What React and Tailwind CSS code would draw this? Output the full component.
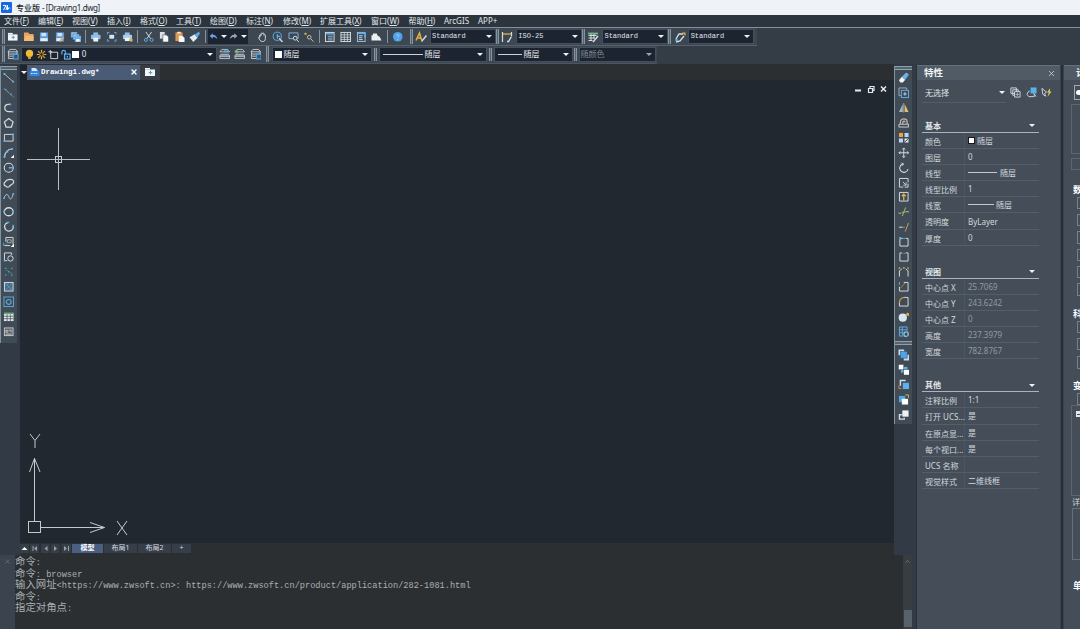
import { ChevronUp, X } from 'lucide-react';

const W = '#d5dde3';
const B = '#5cadea';
const Y = '#e3b348';

// 12x12 toolbar glyphs
const icons = {
  newFile: <><rect x="1" y="3.5" width="10" height="6.500" fill="#f2f6f8" /><path d="M1 2.8h5" stroke="#f2f6f8" strokeWidth="1.600" /><path d="M6.500 4.8v3.600M4.700 6.6h3.600" stroke="#4aa3bd" /></>,
  open: <><path d="M1 1.500h4.500l1 1.500H11v7H1z" fill="#e9a45c" /><path d="M2.5 5h8.5v5.500H1z" fill="#f4b878" /></>,
  save: <><rect x="2" y="1.500" width="8.500" height="9.500" fill="#5a9bdc" /><rect x="3.5" y="2" width="5" height="3.5" fill="#cfe2f4" /><rect x="2.5" y="7.5" width="7.500" height="3" fill="#e8f0f6" /></>,
  saveAs: <><rect x="2" y="1.500" width="8.500" height="9.500" fill="#5a9bdc" /><rect x="3.5" y="2" width="5" height="3.5" fill="#cfe2f4" /><rect x="2.5" y="7.5" width="6" height="3" fill="#e8f0f6" /><path d="M6 11l4-4.5" stroke="#e9a45c" strokeWidth="1.8" /></>,
  saveAll: <><path d="M1 1h6.5v6H1zM3 3h6.5v6H3z" fill="#9cc7ee" stroke="#2f5f92" strokeWidth=".5" /><rect x="5" y="5" width="6.5" height="6.5" fill="#6cb0ec" /><rect x="6.5" y="8.5" width="3.5" height="2.5" fill="#fff" /></>,
  print: <><rect x="3.5" y="1.5" width="5" height="3" fill="#8dbdea" /><rect x="1" y="4" width="10" height="4.5" rx="1" fill="#8dbdea" /><rect x="3.5" y="7" width="5" height="4" fill="#eef4f8" /></>,
  preview: <><path d="M1.5 3.5v-2h2M8.5 1.5h2v2M10.5 8.5v2h-2M3.5 10.5h-2v-2" stroke={B} /><rect x="3.5" y="4" width="5" height="4" fill="#d9e7f2" /></>,
  plot: <><rect x="3" y="1.5" width="5" height="3" fill="#8dbdea" /><rect x="1" y="4" width="9.500" height="4.5" rx="1" fill="#a9cdee" /><rect x="3" y="7" width="5" height="3.5" fill="#eef4f8" /><circle cx="9.5" cy="9.5" r="1.8" fill={Y} /></>,
  cut: <><path d="M3 1l5 7M9 1L4 8" stroke={W} /><circle cx="3" cy="9.3" r="1.6" stroke={B} /><circle cx="9" cy="9.3" r="1.6" stroke={B} /></>,
  copy: <><path d="M2 1h5v7H2z" fill="#d9e0e5" /><path d="M5 4h3.5L11 6v5.5H5z" fill="#f6f8f9" stroke="#3b4650" strokeWidth=".6" /></>,
  paste: <><rect x="1.5" y="1.5" width="7.5" height="9" fill="#dc9650" /><rect x="3.5" y=".8" width="3.5" height="1.8" fill="#eee" /><path d="M5 5h3.5L11 7v4.5H5z" fill="#f6f8f9" /></>,
  brush: <><path d="M.500 6.500l5.500-3 3 3.500-4.500 4.500z" fill="#ddeaf4" /><path d="M6 4l2.5 3L11.5 2.5 10 .8z" fill={B} /></>,
  undo: <path d="M5 1.5v2.2c3.5 0 5.5 2 6 6-1.600-2.200-3.200-3-6-3v2.300L.8 5.300z" fill="#6f9fe0" />,
  redo: <path d="M7 1.5v2.2c-3.5 0-5.5 2-6 6 1.600-2.200 3.200-3 6-3v2.300l4.200-3.700z" fill="#98a3ad" />,
  hand: <path d="M3 6V4.2M3 4.5c0-1 1.300-1 1.300 0V3c0-1.200 1.500-1.200 1.500 0 0-1.200 1.500-1.200 1.500 0v1.500c0-1 1.400-1 1.400 0V8C8.700 10 7.500 11 6 11 3.500 11 2.300 9 1.800 7c-.2-1 .9-1 1.200-.4z" stroke={W} />,
  zoomRt: <><circle cx="5.5" cy="5.5" r="4.3" stroke={B} /><path d="M5.5 3v5M5.500 5.500h3" stroke="#7cc0f0" /><path d="M7.5 7.5l3.500 4" stroke={W} strokeWidth="1.4" /></>,
  zoomWin: <><path d="M1 2h9.5v6H1z" stroke="#7fb3dd" /><circle cx="7.5" cy="7.5" r="2" fill="#3c4751" stroke={W} /><path d="M9 9l2.300 2.500" stroke={W} /></>,
  zoomPrev: <><path d="M1.500 3l1.500-1 .5 1.500z" fill={Y} stroke={Y} /><circle cx="6.500" cy="6.500" r="1.9" stroke="#c9c2a0" /><path d="M8 8l3 3.200" stroke="#bfc8c8" /></>,
  props: <><rect x="1.5" y="1.5" width="9" height="9.5" stroke={W} /><path d="M2 3h8" stroke={B} strokeWidth="1.6" /><path d="M4 5.5h5M4 7.5h5M4 9.3h5" stroke="#90b7d6" /></>,
  sheet: <><rect x="1" y="1.5" width="10" height="9.5" stroke={W} /><path d="M1 4h10M1 6.5h10M1 8.8h10M4.5 2v9M7.7 2v9" stroke={W} strokeWidth=".8" /></>,
  palette: <><rect x="1.5" y="1.5" width="8" height="9.5" stroke="#9cc0dd" /><path d="M2 2.500h8" stroke={B} strokeWidth="1.500" /><path d="M3 5h4M3 7h3.500M3 9h4" stroke={W} /><path d="M9.500 3v4" stroke={B} strokeWidth="1.800" /></>,
  cloud: <path d="M.500 10V4.500h1.500V2.500h4l1 2.500 2 1 2 4z" fill="#eceff1" />,
  help: <><circle cx="6" cy="6" r="5" fill="#4fa2ea" /><path d="M4.7 5c0-2 2.800-1.800 2.600 0-.2 1-1.300 1-1.300 2" stroke="#bfe0ff" strokeWidth=".8" /><path d="M6 8.3v.8" stroke="#bfe0ff" /></>,
  textStyle: <><path d="M1 9.5L4.5 2 6.500 9M2.5 7h3.500" stroke={Y} strokeWidth="1.500" /><path d="M6.5 10.5L11.500 4.500" stroke={W} strokeWidth="1.500" /></>,
  dimStyle: <><path d="M1.500 1v10M10.5 1v4" stroke={W} strokeWidth="1.2" /><path d="M2 3h8" stroke={Y} strokeWidth="1.300" /><path d="M6 10.5h1.500L10.500 5.500" stroke={W} strokeWidth="1.4" /></>,
  tableStyle: <><path d="M1 2.5h10" stroke="#76b68b" strokeWidth="1.8" /><path d="M1.500 4.500h8M1.500 7h6M1.500 9.500h4M4 3v7M7 3v5" stroke={W} /><path d="M6 11l5-6" stroke={W} strokeWidth="1.4" /></>,
  leader: <><path d="M2 8l3-5h4M2 11l4-1 4-5" stroke={W} strokeWidth="1.4" /><path d="M8 1.500h3.500V5" fill={Y} /><circle cx="2.5" cy="9" r="1.3" fill={B} /></>,
  layers: <><path d="M3 1.500h6L11 4H1zM1.500 4v2.300h9V4M1.500 6.500v2h5M1.500 9v2h5" stroke={W} strokeWidth=".9" /><rect x="7" y="6.500" width="4.500" height="5" stroke={B} fill="#2e5577" /></>,
  layerPrev: <><path d="M3 1.500h6L11 4H1zM1.500 6.500h9M1 9h10M1 11h10V7.500H1z" stroke={W} strokeWidth=".8" /><path d="M5 2.500h5v2H5z" fill={B} /></>,
  layerAdd: <><path d="M3 1.500h6L11 4H1zM1.500 6.500h9M1 9h10M1 11h10V7.500H1z" stroke={W} strokeWidth=".8" /><path d="M1 4h4M3 2v4" stroke="#7ccf70" /></>,
  bulb: <><circle cx="6" cy="4.800" r="4" fill="#efbb33" /><path d="M4.500 8h3v3h-3z" fill="#c9a440" /></>,
  sun: <><circle cx="6" cy="6" r="2" stroke="#efb233" /><path d="M6 .8v2.400M6 8.800v2.400M.8 6h2.400M8.800 6h2.400M2.300 2.300L4 4M8 8l1.700 1.700M9.700 2.300L8 4M4 8L2.300 9.700" stroke="#efb233" strokeWidth="1.300" /></>,
  frame: <><path d="M3 3.500h7.500v7H3z" stroke={W} /><path d="M2.500 1v4M.5 3h4" stroke={W} /></>,
  lock: <><path d="M2 6V3.500c0-2.600 4-2.600 4 0V6" stroke={B} strokeWidth="1.300" /><rect x="5" y="5.500" width="6" height="5.500" stroke={B} strokeWidth="1.400" /><path d="M8 7.500v1.800" stroke={W} /></>,
  // draw toolbar
  line: <><path d="M1 1.500L11 10.500" stroke="#a9bccb" /><path d="M.5 1h2v2h-2zM9.500 9h2v2h-2z" fill={B} /></>,
  xline: <><path d="M1 1.500L11 10.500" stroke="#8fa7a9" strokeDasharray="3 1" /><path d="M2.500 3h1.500M7.500 7.500H9" stroke={B} strokeWidth="1.400" /></>,
  pline: <><path d="M10 10H5.500C.5 10 .8 2.500 5.500 2.500H8" stroke={W} strokeWidth="1.300" /><path d="M6.500 1.500h2v2h-2zM9 9h2v2H9z" fill={B} /></>,
  polygon: <path d="M6 1.500l4.500 3.600-1.700 5.400H3.200L1.500 5.100z" stroke={W} strokeWidth="1.300" />,
  rect: <><path d="M1.500 2.500h9v7h-9z" stroke={W} /><path d="M.5 8.500h2v2h-2zM9.500 1.500h2v2h-2z" fill={B} /></>,
  arc: <><path d="M1.500 10.500C2 6 5 2.500 9.500 1.800" stroke={W} strokeWidth="1.200" /><path d="M.5 9.500h2v2h-2zM8.500 1h2v2h-2zM3.500 4h2v2h-2z" fill={B} /><path d="M11.500 8v3.500H8z" fill="#fff" /></>,
  circle: <><circle cx="6" cy="6" r="4.700" stroke={W} strokeWidth="1.100" /><path d="M6 6h5" stroke={B} strokeWidth="1.600" /></>,
  cloudRev: <path d="M3 9.500C.5 9 .5 6 2.500 5 3.500 2.500 6 3 7 2.500c3-.5 4.500 1.500 4 3C10.500 8 8 7.500 6.500 10c-1 .8-2.500.6-3.500-.5z" stroke={W} strokeWidth="1.200" />,
  spline: <><path d="M1 8c1.500-6 4-5 5-2s3 4 4.500-3" stroke="#b9c9d3" /><path d="M.3 7.500h1.700M10 3h1.700" stroke={B} strokeWidth="1.600" /></>,
  ellipse: <><ellipse cx="6" cy="6" rx="4.700" ry="4.200" stroke={W} strokeWidth="1.400" /><path d="M1.200 4.800v2.400M10.800 4.800v2.400" stroke={B} strokeWidth="1.400" /></>,
  ellArc: <><path d="M5 1.700A4.500 4.500 0 1 0 10.600 5" stroke={W} strokeWidth="1.400" /><path d="M4 1.500h2.500" stroke="#41c5d8" strokeWidth="1.500" /><path d="M10.500 4v3" stroke={B} strokeWidth="1.300" /></>,
  insert: <><path d="M3 1.500h7.500V9M1.500 10h6M3 1.500V6" stroke={W} /><path d="M4.500 4h4v3h-4z" stroke="#bcc6cd" strokeWidth=".8" /><path d="M.8 7v3.500M3.500 8.500l1 1" stroke={B} /><path d="M11.500 8v3.500H8z" fill="#fff" /></>,
  block: <><path d="M9 4V2H1.500v8h3" stroke={W} /><circle cx="7.800" cy="7.800" r="2.800" stroke={W} /><path d="M.8 9h1.700v2H.8z" fill={B} /></>,
  points: <path d="M2 2.500h1.500M8.500 2.500H10M5.200 6h1.600M2 9.500h1.500M8.500 9.500H10M3.500 4.500h1M8 7.500h1" stroke="#43a8bb" strokeWidth="1.400" />,
  hatch: <><rect x="1.500" y="1.500" width="9" height="9" fill="#416a8b" stroke={W} /><path d="M2 6l4-4M2 10l8-8M6 10l4-4M2 2l8 8" stroke="#79a8cb" strokeWidth=".6" /></>,
  region: <><rect x="1" y="1" width="10" height="10" stroke="#58a8d8" /><circle cx="6" cy="6.200" r="2.500" stroke="#58a8d8" strokeWidth="1.200" /></>,
  table: <><rect x="1" y="2" width="10" height="8.500" fill="#e4e8ea" /><path d="M1 2.500h10" stroke="#63a873" strokeWidth="1.600" /><path d="M1 5.500h10M1 8h10M4.300 3.500v7M7.700 3.500v7" stroke="#4b5560" strokeWidth=".8" /></>,
  mtext: <><rect x="1.500" y="2" width="9" height="8" stroke="#bfc7cc" fill="#59646e" /><path d="M3 4.500h2v2H3zM6 4.500h2.500v2" stroke="#d5c5a0" strokeWidth=".9" /><path d="M3 8.500h6" stroke={W} strokeWidth=".8" /></>,
  // modify toolbar
  erase: <><path d="M1 8.500L4 5l3.500 3L5 11H2.500z" fill="#f1f5f7" /><path d="M4 5l4-4c1-.6 3.500 1 3 2.500L7.500 8z" fill="#69b3e8" /></>,
  copyObj: <><path d="M3 9H1V1h8v2" stroke="#98adbd" /><rect x="3.500" y="3.500" width="7.500" height="7.500" stroke={B} /><path d="M7.200 5.500v3.500M5.500 7.200H9" stroke="#b4d9ef" /></>,
  mirror: <><path d="M5 2v8.500H1z" fill="#a9b4bc" /><path d="M7 2v8.500h4z" fill="#e6c15c" /><path d="M6 1v10" stroke={W} strokeWidth=".6" /></>,
  offset: <><path d="M1 10.500h10V7.500H1z" stroke={W} strokeWidth=".9" /><path d="M2.500 7V5C2.500 1 9.500 1 9.500 5v2.500M5 7.500V5.500c0-1.500 2.500-1.500 2.500 0" stroke="#c5b6a6" strokeWidth="1.300" /></>,
  array: <><rect x="1" y="1" width="4.200" height="4.200" fill="#f0a23c" /><path d="M6.800 1H11v4.200H6.800zM1 6.800h4.200V11H1z" fill="#b8d7f5" /><path d="M6.800 6.800H11V11H6.800z" fill="#dfe6ea" /><path d="M7 10.500l4-3.500" stroke="#39424c" /></>,
  move: <path d="M6 1v10M1 6h10M4.500 2.500L6 1l1.500 1.500M4.500 9.500L6 11l1.500-1.500M2.500 4.500L1 6l1.500 1.500M9.500 4.500L11 6 9.500 7.500" stroke={W} />,
  rotate: <><path d="M5 2.200A4.400 4.400 0 1 0 10.500 7.500" stroke={W} strokeWidth="1.100" /><path d="M3.500 1l2.500 1L4.300 4" stroke={W} strokeWidth=".9" /></>,
  scale: <><path d="M5.500 10.500h-4v-9h9v4" stroke={W} /><path d="M5 5l3 3M8.500 5.500v3h-3" stroke={W} strokeWidth=".9" /><path d="M7 10.500h3.500V7" stroke={W} /></>,
  stretch: <><path d="M1.500 1.500h9v9h-9z" stroke={W} /><path d="M6 10V4M4 5.500l2-2.200 2 2.200" stroke={Y} strokeWidth="1.300" /></>,
  trim: <><path d="M.500 7.500h3M7.500 6h4" stroke="#b5bfb0" /><path d="M4.500 10.500L8 1.500M4 6.500h3" stroke="#aebd5d" /></>,
  extend: <><path d="M1 6.500h4" stroke={W} /><path d="M5.500 6.500h1.500" stroke={B} /><path d="M7.500 11l3.500-9" stroke="#d99a60" /></>,
  breakPt: <><path d="M5 2.500H2v8h8.500v-8H8" stroke={W} /><path d="M1 1.500h2v2M5.500 2.500h2" stroke="#48b6cf" /></>,
  breakSel: <><path d="M4 2H2v8.500h8.500V2H8" stroke={W} /><path d="M4.500 2.500h3" stroke="#48b6cf" strokeDasharray="1 1" /></>,
  join: <><path d="M1.500 11V5l2.500-2M10.500 11V5L8 3" stroke={W} /><path d="M1 3l1-1.500M5 2h2M10 1.500L11 3" stroke={Y} strokeWidth="1.200" /></>,
  chamfer: <><path d="M6 1.500h4.500v9H1.500V6" stroke={W} /><path d="M2 8l5.500-6" stroke="#a68a45" /><path d="M1.500 1v3" stroke={B} /></>,
  fillet: <><path d="M6 1.500h4.500v9H1.500V6.500" stroke={W} /><path d="M1.500 7c0-3 2-5.500 5.500-5.500" stroke="#d6a049" strokeWidth="1.200" /></>,
  explode: <><circle cx="5" cy="7" r="4.300" fill="#d8e6ef" /><path d="M8 4l1.500-2.500L12 3l-1 2.500z" fill="#e4b04d" /></>,
  editAttr: <><path d="M1.500 1h8v4M1.500 1v9.500h4M1.500 4h8M4.500 1v9M1.500 7h4" stroke={B} /><circle cx="8.500" cy="8.500" r="2.300" stroke="#8cc0e0" strokeWidth="1.400" /></>,
  // draw order
  front: <><rect x=".5" y=".5" width="6" height="6" fill="#cfd8de" /><rect x="6" y="6" width="6" height="6" fill="#cfd8de" /><rect x="2.500" y="2.500" width="7" height="7" fill="#4da4ea" stroke="#2c5c88" strokeWidth=".6" /></>,
  back: <><rect x="3" y="3" width="7" height="6" fill="#5caee8" /><rect x=".5" y=".5" width="5.500" height="5.500" fill="#fff" stroke="#3b4650" strokeWidth=".5" /><rect x="6" y="6" width="6" height="5.500" fill="#fff" stroke="#3b4650" strokeWidth=".5" /></>,
  above: <><path d="M2.500 7V1.500H8" stroke={W} strokeWidth="1.500" /><rect x="5" y="4" width="6.500" height="6.500" fill="#5cb0ef" /><path d="M1 6.500v3.500h2.500" stroke="#d5893e" /></>,
  under: <><rect x="1" y="2" width="6.500" height="6.500" fill="#4ea8ea" /><rect x="4" y="5" width="6.500" height="6" fill="#fff" /><path d="M7.500 1H11v3" stroke={Y} /></>,
  order: <><path d="M4 6H1.500v4.500h5V9" stroke={W} strokeWidth="1.400" /><rect x="4.500" y="1.500" width="6.500" height="6.500" fill="#eef2f4" /></>,
  quickSel: <><path d="M1 1h6v6H1zM3 3h6v6H3z" stroke={W} /><path d="M5 5h6v6H5z" fill="#444d58" stroke={W} /><path d="M8 6v4M6 8h4" stroke={W} strokeWidth=".7" /></>,
  pick: <><rect x="5" y="0.500" width="6.500" height="6.500" fill="#5cb0ef" /><path d="M4 4.500H3L1 8l2 2.500h6V7.500M8.500 7l2.500 3.500" stroke={W} /></>,
  toggle: <><path d="M1 1.500l5 4-2 1.500 1 3-3-2z" stroke={W} /><path d="M10 1L6.500 6h2L7 11l4.500-6H9.500z" fill="#e8c552" /></>,
};

function Icon({ name, size = 12 }) {
  return (
    <svg width={size} height={size} viewBox="0 0 12 12" fill="none" className="block shrink-0">
      {icons[name]}
    </svg>
  );
}

const Cell = ({ name }) => (
  <div className="flex w-[15.65px] shrink-0 items-center justify-center"><Icon name={name} size={11.5} /></div>
);

const Sep = () => (
  <div className="flex w-[5.2px] shrink-0 justify-center py-[2px]"><div className="w-px bg-[#8694a0]" /></div>
);

const Grip = ({ className = '' }) => (
  <div className={`w-[3px] shrink-0 border-x border-[#8593a0] bg-[#56636f] ${className}`} />
);

const Down = ({ className = 'border-t-[#eef2f5]' }) => (
  <div className={`h-0 w-0 shrink-0 border-x-[3px] border-t-[3.5px] border-x-transparent ${className}`} />
);

function Combo({ className, children, dim }) {
  return (
    <div className={`flex h-[15px] shrink-0 items-center border border-[#444f5b] bg-[#1d2431] pr-[3px] ${className}`}>
      {children}
      <div className="grow" />
      <Down className={dim ? 'border-t-[#9ca5ae]' : 'border-t-[#eef2f5]'} />
    </div>
  );
}

const mono = "font-['Liberation_Mono','Noto_Sans_CJK_SC',monospace]";

const menus = [
  { t: '文件', k: 'F', w: 'w-[34px]' },
  { t: '编辑', k: 'E', w: 'w-[34px]' },
  { t: '视图', k: 'V', w: 'w-[35px]' },
  { t: '插入', k: 'I', w: 'w-[33px]' },
  { t: '格式', k: 'O', w: 'w-[36px]' },
  { t: '工具', k: 'T', w: 'w-[34px]' },
  { t: '绘图', k: 'D', w: 'w-[36px]' },
  { t: '标注', k: 'N', w: 'w-[37px]' },
  { t: '修改', k: 'M', w: 'w-[37px]' },
  { t: '扩展工具', k: 'X', w: 'w-[51px]' },
  { t: '窗口', k: 'W', w: 'w-[37.5px]' },
  { t: '帮助', k: 'H', w: 'w-[35.5px]' },
  { t: 'ArcGIS', w: 'w-[34px]' },
  { t: 'APP+', w: 'w-[30px]' },
];

const styles = [
  { icon: 'textStyle', text: 'Standard' },
  { icon: 'dimStyle', text: 'ISO-25' },
  { icon: 'tableStyle', text: 'Standard' },
  { icon: 'leader', text: 'Standard' },
];

const drawTools = ['line', 'xline', 'pline', 'polygon', 'rect', 'arc', 'circle', 'cloudRev', 'spline', 'ellipse',
  'ellArc', 'insert', 'block', 'points', 'hatch', 'region', 'table', 'mtext'];
const modifyTools = ['erase', 'copyObj', 'mirror', 'offset', 'array', 'move', 'rotate', 'scale', 'stretch', 'trim',
  'extend', 'breakPt', 'breakSel', 'join', 'chamfer', 'fillet', 'explode', 'editAttr'];
const orderTools = ['front', 'back', 'above', 'under', 'order'];

const groups = [
  {
    title: '基本',
    rows: [
      ['颜色', <><i className="mr-[2px] h-[7px] w-[7px] border border-[#15191d] bg-white" />随层</>],
      ['图层', '0'],
      ['线型', <><i className="mr-[3px] h-px w-[29px] bg-[#c2cad0]" />随层</>],
      ['线型比例', '1'],
      ['线宽', <><i className="mr-[2px] h-px w-[26px] bg-[#c2cad0]" />随层</>],
      ['透明度', 'ByLayer'],
      ['厚度', '0'],
    ],
  },
  {
    title: '视图',
    dim: true,
    rows: [['中心点 X', '25.7069'], ['中心点 Y', '243.6242'], ['中心点 Z', '0'], ['高度', '237.3979'], ['宽度', '782.8767']],
  },
  {
    title: '其他',
    rows: [['注释比例', '1:1'], ['打开 UCS...', '是'], ['在原点显...', '是'], ['每个视口...', '是'], ['UCS 名称', ''], ['视觉样式', '二维线框']],
  },
];

function MainToolbar() {
  return (
    <div className="flex h-[18px] w-[757px] border-b border-[#56616c] bg-[#3c4751] pl-[2px]">
      <Grip className="my-px" />
      {['newFile', 'open', 'save', 'saveAs', 'saveAll'].map((n) => <Cell key={n} name={n} />)}
      <Sep />
      {['print', 'preview', 'plot'].map((n) => <Cell key={n} name={n} />)}
      <Sep />
      {['cut', 'copy', 'paste', 'brush'].map((n) => <Cell key={n} name={n} />)}
      <Sep />
      <div className="my-[1px] flex w-[39.5px] shrink-0 items-center justify-around bg-[#1d2431]">
        <Icon name="undo" size={9} />
        <Down />
        <Icon name="redo" size={9} />
        <Down />
      </div>
      <div className="w-[6.7px] shrink-0" />
      {['hand', 'zoomRt', 'zoomWin', 'zoomPrev'].map((n) => <Cell key={n} name={n} />)}
      <Sep />
      {['props', 'sheet', 'palette', 'cloud'].map((n) => <Cell key={n} name={n} />)}
      <Sep />
      <Cell name="help" />
      <div className="w-[4px] shrink-0" />
      {styles.map((s) => (
        <div key={s.icon} className="flex w-[86.2px] shrink-0 items-center">
          <Grip className="h-[15px]" />
          <div className="flex w-[17px] justify-center"><Icon name={s.icon} size={12} /></div>
          <Combo className={`w-[66px] pl-[1.5px] text-[7px] text-[#e1e6ea] ${mono}`}>{s.text}</Combo>
        </div>
      ))}
    </div>
  );
}

function LayerToolbar() {
  return (
    <div className="flex h-[18px] w-[657px] items-center border-b border-[#4b5661] bg-[#3c4751] pb-px pl-[2px] text-[8px] text-[#e6eaed]">
      <Grip className="h-[16px]" />
      <Cell name="layers" />
      <Combo className="w-[196px] pl-[2px]">
        <div className="flex gap-[1px]">
          {['bulb', 'sun', 'frame', 'lock'].map((n) => <Icon key={n} name={n} size={11} />)}
        </div>
        <i className="mr-[3px] ml-[1px] h-[7px] w-[7px] bg-white" />
        0
      </Combo>
      {['layerPrev', 'layerAdd', 'layers'].map((n) => <Cell key={n + 'b'} name={n} />)}
      <Grip className="mr-[3px] ml-[2px] h-[16px]" />
      <Combo className="w-[100px] pl-[2px]"><i className="mr-[2px] h-[7px] w-[7px] bg-white" />随层</Combo>
      <Grip className="mx-[2px] h-[13px]" />
      <Combo className="w-[108px] pl-[3px]"><i className="mr-[2px] h-px w-[40px] bg-[#cdd4d9]" />随层</Combo>
      <Grip className="mx-[2px] h-[13px]" />
      <Combo className="w-[79px] pl-[3px]"><i className="mr-[2px] h-px w-[24px] bg-[#cdd4d9]" />随层</Combo>
      <Grip className="mr-[2px] ml-px h-[13px]" />
      <Combo className="w-[77px] pl-[1px] text-[#7f8993]" dim>随颜色</Combo>
    </div>
  );
}

function Canvas() {
  return (
    <div className="h-[463px] bg-[#212830]">
      <svg width="875" height="463" viewBox="20 80 875 463" fill="none" stroke="#c5cacd" className="block">
        <path d="M58.500 128v62M27 159.500h63" stroke="#b9bec1" />
        <rect x="55.500" y="156.500" width="6" height="6" />
        {/* UCS marker */}
        <rect x="28.500" y="521.500" width="12" height="11" />
        <path d="M34.500 521V458M29.500 472L34.500 458.500 40 472M41 527.500h63.500M90 522.500l14.500 5-14.500 5" />
        <path d="M30 434l5 6.500 5-6.500M35 440.500V448M117 521l10 14M127 521l-10 14" />
        {/* window buttons */}
        <g stroke="#e6eaed">
          <path d="M855 90.500h6" strokeWidth="2" />
          <path d="M868.500 88.500h4v4h-4zM870 88v-1.500h4v4h-1.500" strokeWidth="1.200" />
          <path d="M881 86.500l5 5M886 86.500l-5 5" strokeWidth="1.500" />
        </g>
      </svg>
    </div>
  );
}

function LayoutTabs() {
  return (
    <div className="flex h-[10px] items-center gap-[1px] bg-[#2b2f32] text-[7px] text-[#d6dce1]">
      <svg width="51" height="9" viewBox="0 0 51 9" className="block shrink-0">
        <path d="M0 0h9v9H0zM10 0h9v9h-9zM21 0h8.500v9H21zM31 0h8.500v9H31zM41.500 0H51v9h-9.500z" fill="#363e48" />
        <path d="M1.500 6h6l-3-3z" fill="#fff" />
        <path d="M17 2v5l-3-2.500zM27.500 2v5l-3-2.500zM34 2v5l3-2.500zM44 2v5l3-2.500z" fill="#98a3ad" />
        <path d="M13 2v5M48.500 2v5" stroke="#98a3ad" />
      </svg>
      <div className="flex h-[9px] w-[31px] items-center justify-center bg-[#4a6083] font-bold text-white">模型</div>
      <div className="flex h-[9px] w-[33px] items-center justify-center bg-[#363e49]">布局1</div>
      <div className="flex h-[9px] w-[33px] items-center justify-center bg-[#363e49]">布局2</div>
      <div className="flex h-[9px] w-[19px] items-center justify-center bg-[#363e49]">+</div>
    </div>
  );
}

const Zh = ({ children }) => <span className="text-[10.4px]">{children}</span>;

function CommandLine() {
  return (
    <div className="flex h-[74px] w-[912px] bg-[#2b2f31]">
      <div className="flex w-[15px] shrink-0 justify-center bg-[#3a434e] pt-[3px]"><X size={7} color="#77818b" /></div>
      <div className={`grow pt-[2px] text-[8.63px] text-[#a9afb3] ${mono}`}>
        {[
          <><Zh>命令</Zh>:</>,
          <><Zh>命令</Zh>: browser</>,
          <><Zh>输入网址</Zh>&lt;https://www.zwsoft.cn&gt;: https://www.zwsoft.cn/product/application/282-1081.html</>,
          <><Zh>命令</Zh>:</>,
          <><Zh>指定对角点</Zh>:</>,
        ].map((l, i) => <div key={i} className="h-[11.6px] leading-[11.6px] whitespace-pre">{l}</div>)}
      </div>
      <div className="flex w-[9px] shrink-0 flex-col items-center justify-between bg-[#373d41] pt-[3px] pb-[2px]">
        <ChevronUp size={7} color="#8b949b" />
        <div className="h-[17px] w-[8px] bg-[#58626b]" />
      </div>
    </div>
  );
}

const ToolColumn = ({ tools }) => (
  <div className="flex flex-col items-center">
    {tools.map((n) => <div key={n} className="flex h-[14.97px] items-center"><Icon name={n} size={11.5} /></div>)}
  </div>
);

const HBar = () => <div className="h-[4px] w-full border-y border-[#8fa0ad] bg-[#566572]" />;

function Group({ title, rows, dim }) {
  return (
    <div className="w-[117px]">
      <div className="flex h-[13px] items-center justify-between border-b border-[#aab4bc] pr-[4px] pl-[3px] font-bold text-[#e3e8ec]">
        {title}
        <Down />
      </div>
      {rows.map(([label, value]) => (
        <div key={label} className="flex h-[16.2px] border-b border-[#535e69]">
          <div className="w-[43px] shrink-0 border-r border-[#4b5661] pl-[3px] leading-[18px] whitespace-nowrap text-[#d3d9de]">{label}</div>
          <div className={`flex items-center pl-[3px] leading-[15px] whitespace-nowrap ${dim ? 'text-[#919ba4]' : 'text-[#d3d9de]'}`}>{value}</div>
        </div>
      ))}
    </div>
  );
}

function PropertiesPanel() {
  return (
    <div className="w-[143px] shrink-0 bg-[#444d58] text-[8px]">
      <div className="flex h-[15px] items-center justify-between border-t border-[#65727d] bg-[#505b66] pr-[4px] pl-[7px] text-[9.5px] font-bold text-[#f0f3f5]">
        特性
        <X size={9} color="#d8dee3" />
      </div>
      <div className="mt-[3px] flex h-[20px] items-center pl-[5px]">
        <div className="flex h-[19px] w-[84px] items-center justify-between border-b border-[#535e69] pr-[1px] pl-[3px] text-[#e0e5e9]">
          无选择
          <Down />
        </div>
        <div className="ml-[4px] flex gap-[4.5px] pb-[2px]">
          <Icon name="quickSel" size={11} />
          <Icon name="pick" size={11} />
          <Icon name="toggle" size={11} />
        </div>
      </div>
      <div className="flex flex-col gap-[19.7px] pt-[16.5px] pl-[5px]">
        {groups.map((g) => <Group key={g.title} {...g} />)}
      </div>
    </div>
  );
}

const Field = ({ className }) => <div className={`ml-[13px] w-[20px] border border-[#76818b] ${className}`} />;

const Side = ({ className, children }) => (
  <div className={`ml-[9px] h-[12px] text-[9px] leading-[12px] font-bold whitespace-nowrap text-white ${className}`}>{children}</div>
);

// calculator panel, running off the right edge
function CalcPanel() {
  return (
    <div className="w-[17px] shrink-0 overflow-hidden bg-[#444d58]">
      <div className="w-[60px]">
        <div className="h-[15px] border-t border-[#65727d] bg-[#505b66] pl-[12px] text-[9px] leading-[13px] font-bold text-white">计</div>
        <div className="mt-[5px] ml-[10px] flex h-[15px] w-[20px] items-center border border-[#a0aab2] pl-[1px]">
          <div className="h-[5px] w-[9px] rounded-l-full bg-white" />
        </div>
        <div className="mt-[4px] ml-[7px] h-[50px] border border-[#5b6670]" />
        <div className="mt-[4px] ml-[7px] h-[12px] border border-[#5b6670]" />
        <Side className="mt-[14px]">数</Side>
        <Field className="mt-[1px] h-[12px]" />
        <Field className="mt-[5px] h-[12px]" />
        <Field className="mt-[5px] h-[13px]" />
        <Field className="mt-[5px] h-[12px]" />
        <Field className="mt-[5px] h-[12px]" />
        <Field className="mt-[5px] h-[13px]" />
        <Side className="mt-[12px]">科</Side>
        <Field className="mt-[1px] h-[12px]" />
        <Field className="mt-[5px] h-[12px]" />
        <Field className="mt-[6px] h-[13px]" />
        <Side className="mt-[11px]">变</Side>
        <Field className="mt-[1px] h-[12px]" />
        <div className="ml-[7px] h-[91px] border border-[#5b6670] pt-[5px] pl-[4px]">
          <div className="flex h-[6px] w-[8px] items-center bg-[#e3e8ec] pl-[1px]"><div className="h-px w-[5px] bg-[#444d58]" /></div>
        </div>
        <div className="ml-[8px] h-[12px] text-[8px] leading-[12px] text-[#d3d9de]">详</div>
        <div className="ml-[8px] h-[52px] border border-[#65707a]" />
        <Side className="mt-[20px]">单</Side>
      </div>
    </div>
  );
}

export default function App() {
  return (
    <div className="flex h-[629px] w-[1080px] flex-col overflow-hidden bg-[#323a45] font-['Noto_Sans','Noto_Sans_CJK_SC',sans-serif]">
      {/* Title */}
      <div className="flex h-[15px] shrink-0 items-center bg-[#eff3f8] pl-[1px] text-[8px] text-[#20262b]">
        <svg width="11" height="11" viewBox="0 0 11 11" className="mr-[4px]">
          <rect width="11" height="11" rx="1" fill="#1769e0" />
          <path d="M2 3.500h3L2.500 8M5 8l1.500-5v5L8 5.500l1 1" fill="none" stroke="#fff" />
        </svg>
        <span className="mr-[2px] font-medium">专业版</span>
        <span className="tracking-[-0.42px]">- [Drawing1.dwg]</span>
      </div>

      {/* Menu */}
      <div className="flex h-[12px] shrink-0 items-center bg-[#2c353e] pl-[4px] text-[8px] leading-[12px] text-[#e2e7ea]">
        {menus.map((m) => (
          <div key={m.t} className={`shrink-0 whitespace-nowrap ${m.w}`}>
            {m.t}{m.k && <>(<u>{m.k}</u>)</>}
          </div>
        ))}
      </div>

      <div className="h-[37px] shrink-0 border-t border-[#84919b] bg-[#343c46]">
        <MainToolbar />
        <LayerToolbar />
      </div>

      {/* Workspace */}
      <div className="flex grow">
        <div className="flex w-[916px] shrink-0 flex-col">
          <div className="flex h-[491px] shrink-0">
            <div className="w-[20px] shrink-0 pt-[2px]">
              <div className="w-[17px] border-l border-[#8293a0] bg-[#414b56]">
                <HBar />
                <div className="h-[273px]"><ToolColumn tools={drawTools} /></div>
              </div>
            </div>
            <div className="flex w-[874px] shrink-0 flex-col overflow-hidden">
              <div className="flex h-[16px] shrink-0 items-center bg-[#2b2f31]">
                <div className="flex h-[15px] w-[7px] items-center justify-center bg-[#1f252d]"><Down /></div>
                <div className={`flex h-[15px] w-[113px] items-center bg-[#4a5b76] pl-[2px] text-[7.5px] font-bold text-white ${mono}`}>
                  <svg width="11" height="10" viewBox="0 0 10 10" className="mr-[1px]">
                    <path d="M2 1h4l2 2v2H2z" fill="#dbe8f5" />
                    <rect y="4" width="10" height="5" rx="1" fill="#2e86e8" />
                    <path d="M1.500 6.500h7" stroke="#cfe4fa" strokeDasharray="1.500 .8" />
                  </svg>
                  <span className="pt-px">Drawing1.dwg*</span>
                  <X size={8} strokeWidth={4} className="mr-[2px] ml-auto" />
                </div>
                <div className="flex h-[15px] w-[20px] items-center justify-center bg-[#363d45]"><Icon name="newFile" /></div>
              </div>
              <Canvas />
              <LayoutTabs />
              <div className="h-[2px] bg-[#2b2f31]" />
            </div>
            <div className="w-[22px] shrink-0 pt-[2px]">
              <div className="h-[358px] w-[18px] border-l border-[#8293a0] bg-[#414b56]">
                <HBar />
                <ToolColumn tools={modifyTools} />
                <div className="mt-[2px] mb-[2px]"><HBar /></div>
                <ToolColumn tools={orderTools} />
              </div>
            </div>
          </div>
          <CommandLine />
        </div>
        <div className="mt-px flex grow border-l border-[#29313a]">
          <PropertiesPanel />
          <div className="w-[4px] shrink-0 border-x border-[#3a434d] bg-[#262f35]" />
          <CalcPanel />
        </div>
      </div>
    </div>
  );
}
